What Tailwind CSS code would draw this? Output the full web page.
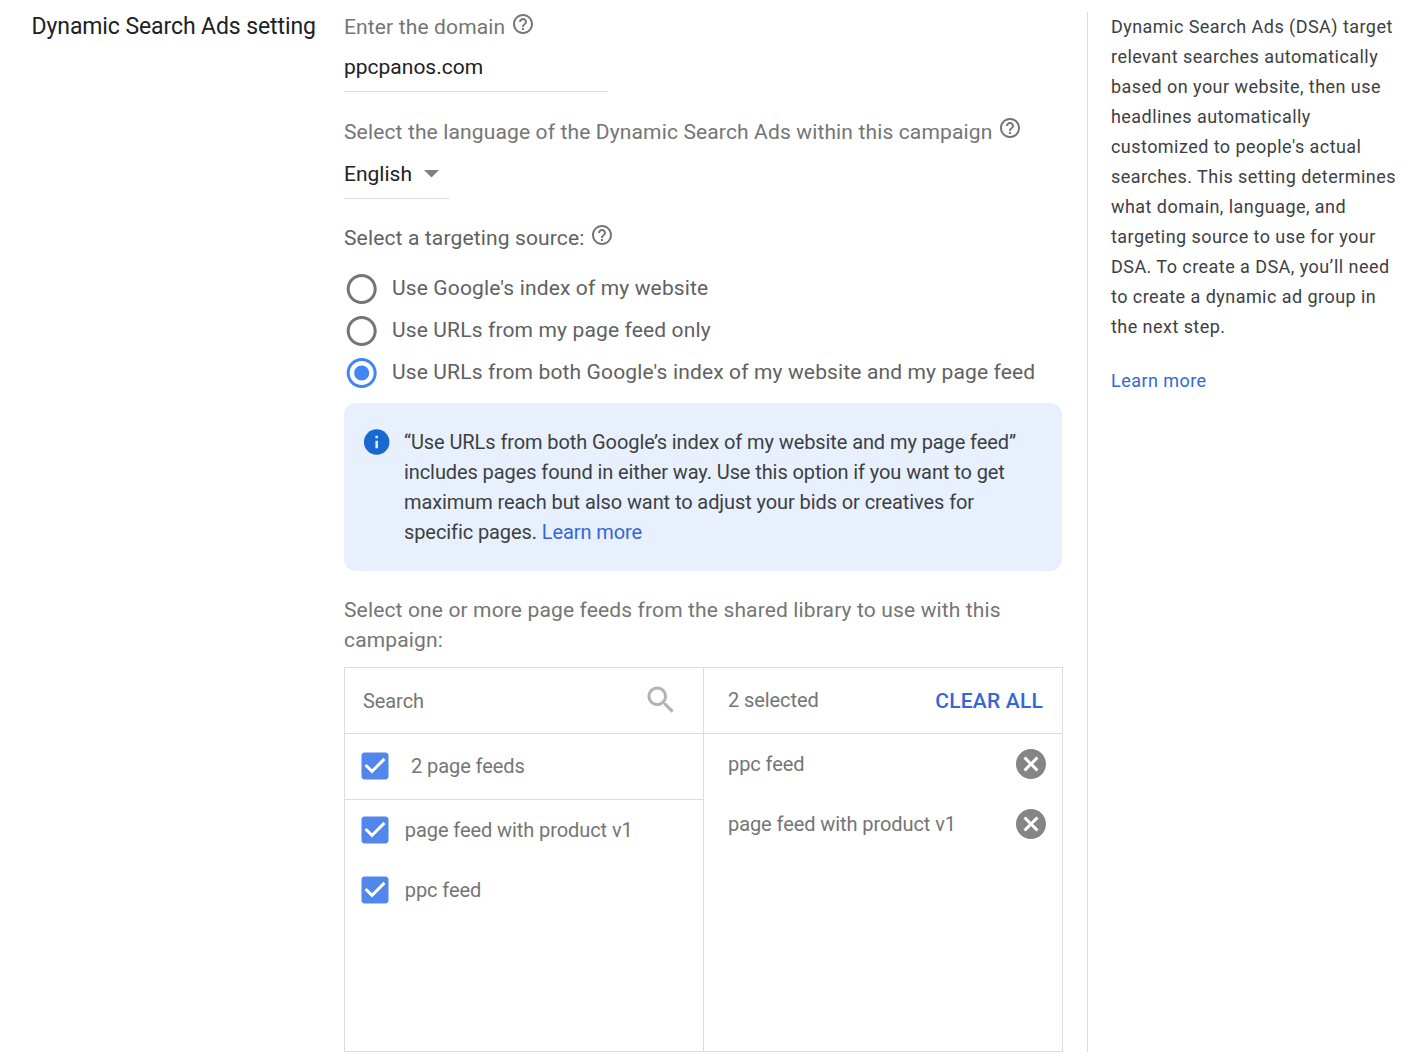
<!DOCTYPE html>
<html lang="en">
<head>
<meta charset="utf-8">
<title>Dynamic Search Ads setting</title>
<script src="https://cdn.jsdelivr.net/npm/@tailwindcss/browser@4"></script>
</head>
<body class="bg-white font-['Roboto',sans-serif] antialiased">
<svg class="hidden">
  <symbol id="help" viewBox="0 0 24 24"><path d="M11 18h2v-2h-2v2zm1-16C6.48 2 2 6.48 2 12s4.48 10 10 10 10-4.48 10-10S17.52 2 12 2zm0 18c-4.41 0-8-3.59-8-8s3.59-8 8-8 8 3.59 8 8-3.59 8-8 8zm0-14c-2.21 0-4 1.79-4 4h2c0-1.1.9-2 2-2s2 .9 2 2c0 2-3 1.75-3 5h2c0-2.25 3-2.5 3-5 0-2.21-1.79-4-4-4z"/></symbol>
  <symbol id="radio-off" viewBox="0 0 24 24"><path d="M11.8 2C6.28 2 1.8 6.48 1.8 12s4.48 10 10 10 10-4.48 10-10S17.32 2 11.8 2zm0 18c-4.42 0-8-3.58-8-8s3.58-8 8-8 8 3.58 8 8-3.58 8-8 8z"/></symbol>
  <symbol id="radio-on" viewBox="0 0 24 24"><path d="M11.8 7c-2.76 0-5 2.24-5 5s2.24 5 5 5 5-2.24 5-5-2.24-5-5-5zm0-5C6.28 2 1.8 6.48 1.8 12s4.48 10 10 10 10-4.48 10-10S17.32 2 11.8 2zm0 18c-4.42 0-8-3.58-8-8s3.58-8 8-8 8 3.58 8 8-3.58 8-8 8z"/></symbol>
  <symbol id="checked" viewBox="0 0 24 24"><path d="M19 3H5c-1.11 0-2 .9-2 2v14c0 1.1.89 2 2 2h14c1.11 0 2-.9 2-2V5c0-1.1-.89-2-2-2zm-9 14l-5-5 1.41-1.41L10 14.17l7.59-7.59L19 8l-9 9z"/></symbol>
  <symbol id="cancel" viewBox="0 0 24 24"><path d="M12 2C6.47 2 2 6.47 2 12s4.47 10 10 10 10-4.47 10-10S17.53 2 12 2zm5 13.59L15.59 17 12 13.41 8.41 17 7 15.59 10.59 12 7 8.41 8.41 7 12 10.59 15.59 7 17 8.41 13.41 12 17 15.59z"/></symbol>
</svg>

<div class="flex items-start pt-3">
  <h1 class="w-[344px] shrink-0 pl-[31.5px] text-[23px] leading-[29px] tracking-[-0.1px] whitespace-nowrap text-[#202124]">Dynamic Search Ads setting</h1>

  <main class="w-[719px] shrink-0 text-[21px] leading-[30px] tracking-[0.14px] text-[#757575]">
    <div class="flex h-[30px] whitespace-nowrap">Enter the domain<svg class="ml-1.5 size-6 fill-[#757575]"><use href="#help"/></svg></div>
    <div class="mt-2.5 h-10 w-[264px] border-b border-[#dadce0] text-[#202124] tracking-normal">ppcpanos.com</div>

    <div class="mt-[25px] flex h-[30px] whitespace-nowrap">Select the language of the Dynamic Search Ads within this campaign<svg class="-mt-px ml-[5.5px] size-6 fill-[#757575]"><use href="#help"/></svg></div>
    <div class="mt-3 flex h-10 w-[105px] border-b border-[#dadce0] text-[#202124] tracking-normal">English<svg class="ml-3 mt-[11px] h-2 w-[15px] fill-[#808080]" viewBox="0 0 15 8"><path d="M0 0h15L7.5 7.5z"/></svg></div>

    <div class="mt-6 flex h-[30px] whitespace-nowrap text-[#616161]">Select a targeting source:<svg class="ml-[5.2px] size-6 fill-[#757575]"><use href="#help"/></svg></div>
    <div class="mt-[14px] text-[#616161]">
      <div class="flex h-[42px] whitespace-nowrap leading-[42px]"><svg class="mt-1 mr-3 size-9 shrink-0 fill-[#757575]"><use href="#radio-off"/></svg>Use Google's index of my website</div>
      <div class="flex h-[42px] whitespace-nowrap leading-[42px]"><svg class="mt-1 mr-3 size-9 shrink-0 fill-[#757575]"><use href="#radio-off"/></svg>Use URLs from my page feed only</div>
      <div class="flex h-[42px] whitespace-nowrap leading-[42px]"><svg class="mt-1 mr-3 size-9 shrink-0 fill-[#4285f4]"><use href="#radio-on"/></svg>Use URLs from both Google's index of my website and my page feed</div>
    </div>

    <div class="mt-2.5 flex h-[168px] w-[718px] rounded-xl bg-[#e8f0fe] py-6 pl-[18px] text-[20px] tracking-[-0.09px] text-[#3c4043]">
      <svg class="mr-3 size-[30px] shrink-0 fill-[#1967d2]" viewBox="0.25 0 24 24"><circle cx="12" cy="12" r="10.2"/><path class="fill-[#e8f0fe]" d="M11 11h2v6h-2zM11 7h2v2h-2z"/></svg>
      <p class="whitespace-nowrap">“Use URLs from both Google’s index of my website and my page feed”<br>includes pages found in either way. Use this option if you want to get<br>maximum reach but also want to adjust your bids or creatives for<br>specific pages. <a class="text-[#3367d6]">Learn more</a></p>
    </div>

    <p class="mt-6 whitespace-nowrap">Select one or more page feeds from the shared library to use with this<br>campaign:</p>

    <div class="mt-3 flex h-[385px] border border-[#dadce0] text-[20px] tracking-[-0.08px]">
      <section class="w-[359px] shrink-0 border-r border-[#dadce0]">
        <div class="flex h-[66px] items-center justify-between border-b border-[#dadce0] pr-6 pl-[18px]"><span>Search</span><svg class="mb-0.5 size-9 fill-[#b3b3b3]" viewBox="0 0 24 24"><path d="M15.5 14h-.79l-.28-.27C15.41 12.59 16 11.11 16 9.5 16 5.91 13.09 3 9.5 3S3 5.91 3 9.5 5.91 16 9.5 16c1.61 0 3.09-.59 4.23-1.57l.27.28v.79l5 4.99L20.49 19l-4.99-5zm-6 0C7.01 14 5 11.99 5 9.5S7.01 5 9.5 5 14 7.01 14 9.5 11.99 14 9.5 14z"/></svg></div>
        <div class="flex h-[66px] items-center border-b border-[#dadce0] pb-px pl-[11.5px]"><svg class="mr-[18.5px] size-9 fill-[#5186ec]"><use href="#checked"/></svg>2 page feeds</div>
        <div class="flex h-[60px] items-center pl-[11.5px]"><svg class="mr-[12.3px] size-9 fill-[#5186ec]"><use href="#checked"/></svg>page feed with product v1</div>
        <div class="flex h-[60px] items-center pl-[11.5px]"><svg class="mr-[12.3px] size-9 fill-[#5186ec]"><use href="#checked"/></svg>ppc feed</div>
      </section>
      <section class="flex-1">
        <div class="flex h-[66px] items-center justify-between border-b border-[#dadce0] pr-[19px] pb-px pl-6"><span>2 selected</span><button class="mt-px text-[21px] font-medium tracking-[0.2px] text-[#3367d6]">CLEAR ALL</button></div>
        <div class="flex h-[60px] items-center justify-between pr-[13px] pl-6"><span>ppc feed</span><svg class="size-9 fill-[#858585]"><use href="#cancel"/></svg></div>
        <div class="flex h-[60px] items-center justify-between pr-[13px] pl-6"><span>page feed with product v1</span><svg class="size-9 fill-[#858585]"><use href="#cancel"/></svg></div>
      </section>
    </div>
  </main>

  <aside class="ml-6 h-[1040px] flex-1 border-l border-[#dadce0] pl-[23px] text-[18px] leading-[30px] tracking-[0.45px] whitespace-nowrap text-[#3c4043]">
    <p>Dynamic Search Ads (DSA) target<br>relevant searches automatically<br>based on your website, then use<br>headlines automatically<br>customized to people's actual<br>searches. This setting determines<br>what domain, language, and<br>targeting source to use for your<br>DSA. To create a DSA, you’ll need<br>to create a dynamic ad group in<br>the next step.</p>
    <a class="mt-6 block text-[#3367d6]">Learn more</a>
  </aside>
</div>
</body>
</html>
